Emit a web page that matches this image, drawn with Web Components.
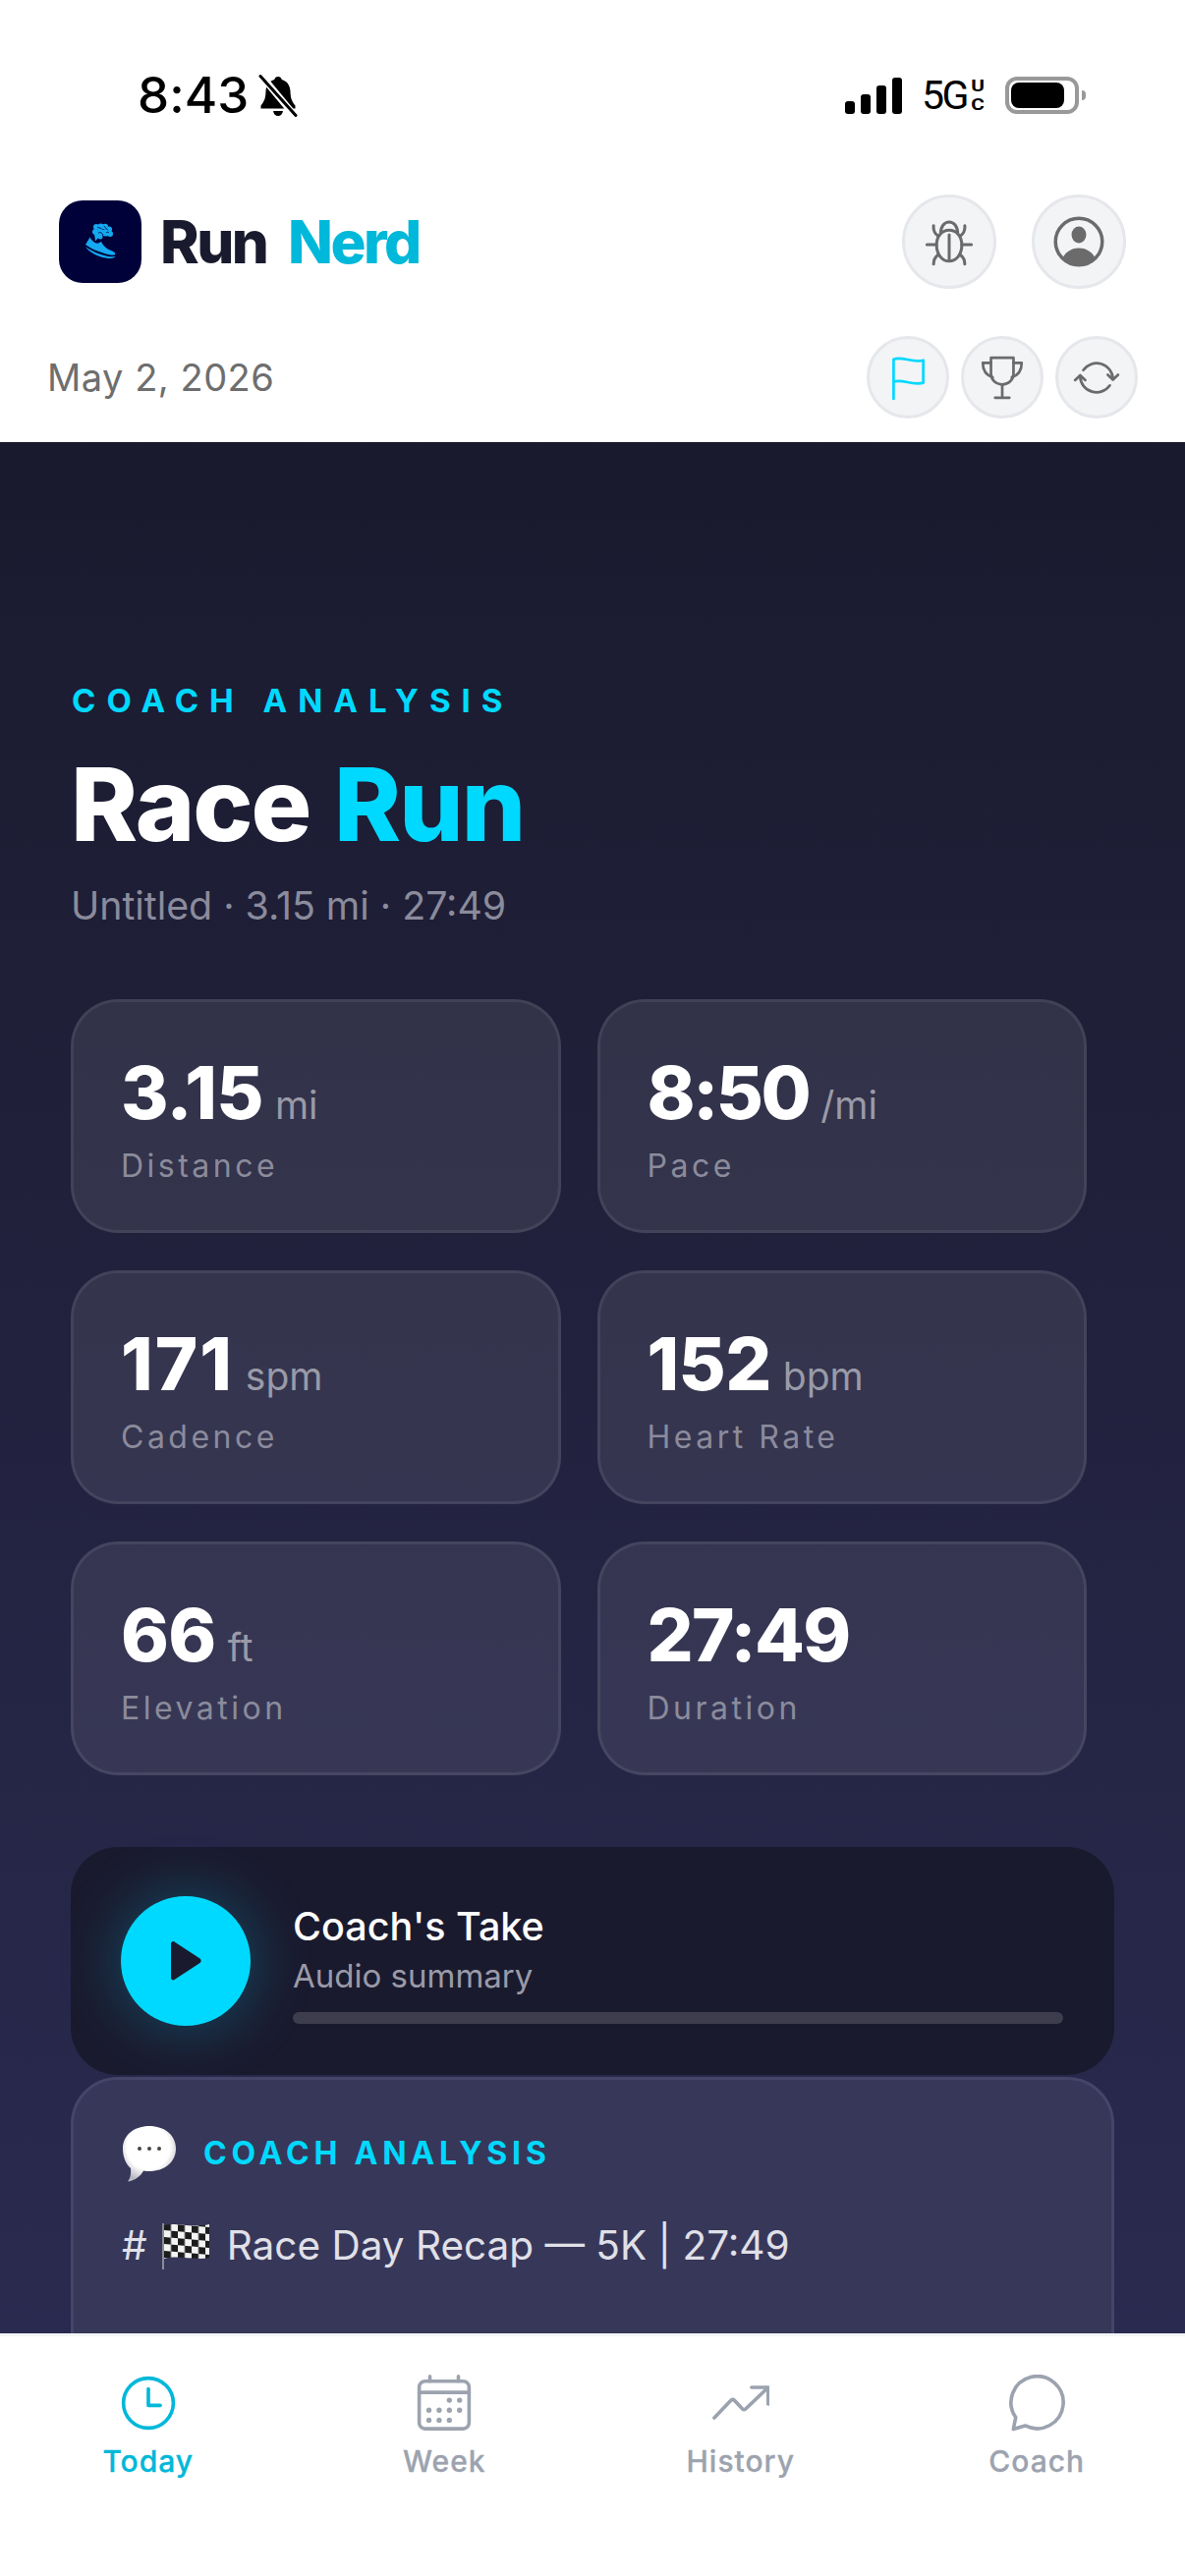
<!DOCTYPE HTML><html lang="en">
<head><meta charset="utf-8">
<title>Run Nerd - Coach Analysis</title>
<style>
  html, body { margin: 0; height: 100%; background: #fff; }
  body { font-family: Inter, "Noto Sans", sans-serif; overflow: hidden; }
  run-app { height: 100vh; }
</style>

<template id="run-app-template">
  <style>
    :host { display: flex; flex-direction: column; overflow: hidden; }
    main { flex: 1; min-height: 0; overflow: hidden; display: flex; flex-direction: column;
      padding: 0 72px; background: linear-gradient(180deg, #1a1a2e 0%, #2a2a50 100%); }
  </style>
  <slot name="top"></slot>
  <main><slot></slot></main>
  <slot name="bottom"></slot>
</template>

<template id="status-bar-template">
  <style>
    :host { display: flex; justify-content: space-between; align-items: center; height: 193px; box-sizing: border-box;
      padding: 1px 101px 0 140px; color: #000; }
    .left, .right { display: flex; align-items: center; }
    .time { font: 500 51px/60px Inter, sans-serif; margin-right: 9px; letter-spacing: .1px; }
    .bars { display: flex; align-items: flex-end; gap: 6px; height: 37px; margin-right: 20px; }
    .bars i { display: block; width: 10px; background: #000; border-radius: 3px; }
    .net { font: 400 41px/44px Roboto, sans-serif; letter-spacing: -2.500px; white-space: nowrap; }
    .uc { display: flex; flex-direction: column; font: 700 16px/19px Roboto, sans-serif; width: 16px; margin: 0 20px 0 3px; align-items: center;
      transform: scaleX(1.3); }
    .battery { display: flex; align-items: center; gap: 3px; }
    .shell { box-sizing: border-box; width: 75px; height: 38px; border: 4px solid #999; border-radius: 12px; padding: 2px; }
    .fill { width: 54px; height: 26px; background: #000; border-radius: 8px; }
    .nub { width: 4px; height: 10px; background: #999; border-radius: 0 4px 4px 0; }
  </style>
  <div class="left">
    <span class="time"><slot name="time"></slot></span>
    <svg width="42" height="43" viewBox="0 0 40 43">
      <path d="M20 2c2 0 3.300 1.200 3.700 2.900 5.500 1.500 8.500 6 8.800 12 .2 6 1 9.500 5 14.500v3H2.500v-3c4-5 4.800-8.500 5-14.500.3-6 3.300-10.500 8.800-12C16.700 3.200 18 2 20 2zM15 37h10c-.4 3-2.500 5-5 5s-4.600-2-5-5z" fill="#000"/>
      <path d="M3 1l34 41" stroke="#fff" stroke-width="7"/>
      <path d="M2 1.500l36 40" stroke="#000" stroke-width="3" stroke-linecap="round"/>
    </svg>
  </div>
  <div class="right">
    <div class="bars"><i style="height:13px"></i><i style="height:20px"></i><i style="height:29px"></i><i style="height:37px"></i></div>
    <span class="net">5G</span>
    <span class="uc"><span>U</span><span>C</span></span>
    <div class="battery"><div class="shell"><div class="fill"></div></div><div class="nub"></div></div>
  </div>
</template>

<template id="app-header-template">
  <style>
    :host { display: flex; justify-content: space-between; align-items: center; padding: 5px 60px 0 60px; height: 96px; }
    .brand { display: flex; align-items: center; gap: 19px; }
    .mark { width: 84px; height: 84px; border-radius: 24px; background: #01013a; display: block; }
    .name { font: 800 60px/70px Inter, sans-serif; letter-spacing: -2.500px; color: #1a1a2e; word-spacing: 11px; }
    .name b { font-weight: 800; color: #00b8d9; }
    .actions { display: flex; gap: 36px; }
  </style>
  <div class="brand">
    <svg class="mark" viewBox="0 0 84 84">
      <g fill="#14a9f0">
        <circle cx="38" cy="27" r="3"/><circle cx="42.500" cy="26.500" r="3"/><circle cx="47" cy="26.800" r="3"/>
        <circle cx="51" cy="29.500" r="3"/><circle cx="52" cy="34" r="3"/><circle cx="47.500" cy="33" r="3.500"/>
        <circle cx="42" cy="32" r="3.500"/><circle cx="37" cy="32" r="3"/><circle cx="42" cy="37" r="2.500"/>
        <path d="M36 34h5l-1 4-3 3.500z"/>
        <path d="M31.500 37.500L27 45c5 4 15 8 23 10 3 .7 6.500 1 7.300 0 .2-2-1.800-3-4.300-4-4.500-1.500-8-5-10-9l-3.500 1.800c-3.500-.3-6-2.800-8-6.300z"/>
        <path d="M27 47c5 4 15 8.500 23 10 3 .5 6 .3 7.500-.2-1 2-4.500 2.500-7.500 2.200-9-1-19-5.500-23-12z"/>
      </g>
      <path d="M39 27c2 1.500 4 .5 5 2.500M46 26c1 2.500 3 2.500 4 4.500M40 33c2-1 4 0 5 2M48 33c1-1 2-1 3 0" fill="none" stroke="#01013a" stroke-width=".8"/>
    </svg>
    <span class="name"><slot name="first"></slot> <b><slot name="second"></slot></b></span>
  </div>
  <div class="actions"><slot name="actions"></slot></div>
</template>

<template id="date-row-template">
  <style>
    :host { display: flex; justify-content: space-between; align-items: center; padding: 48px 48px 24px 48px; height: 84px; }
    .date { font: 400 38px/46px Inter, sans-serif; color: #6e6e6e; letter-spacing: .5px; }
    .actions { display: flex; gap: 12px; }
  </style>
  <span class="date"><slot></slot></span>
  <div class="actions"><slot name="actions"></slot></div>
</template>

<template id="icon-button-template">
  <style>
    :host { display: flex; align-items: center; justify-content: center; box-sizing: border-box;
      width: var(--size, 96px); height: var(--size, 96px); border-radius: 50%;
      background: #f3f4f6; border: 3px solid #e5e7eb; }
    :host([small]) { --size: 84px; }
  </style>
  <slot></slot>
</template>

<template id="coach-hero-template">
  <style>
    :host { display: block; padding: 245px 28px 0 0; }
    .eyebrow { font: 700 33px/36px Inter, sans-serif; letter-spacing: 11px; color: #00d9ff; margin-left: 1px; }
    h1 { margin: 30px 0 0; font: 800 103px/116px Inter, sans-serif; letter-spacing: -2px; word-spacing: 4px; color: #fff; }
    h1 b { font-weight: 800; color: #00d9ff; }
    .sub { margin-top: 21px; font: 400 39.300px/48px Inter, sans-serif; color: #8b8b9c; }
    .grid { margin-top: 71px; display: grid; grid-template-columns: 1fr 1fr; gap: 38px 37px; }
  </style>
  <div class="eyebrow"><slot name="eyebrow"></slot></div>
  <h1><slot name="plain"></slot> <b><slot name="accent"></slot></b></h1>
  <div class="sub"><slot name="sub"></slot></div>
  <div class="grid"><slot></slot></div>
</template>

<template id="stat-card-template">
  <style>
    :host { display: block; box-sizing: border-box; height: 238px; padding: 49px 48px 0;
      background: rgba(255,255,255,.085); border: 3px solid rgba(255,255,255,.075); border-radius: 48px; }
    .top { display: flex; align-items: baseline; gap: 12px; height: 86px; line-height: 86px; }
    .value { font: 800 74px/86px Inter, sans-serif; letter-spacing: var(--track, -.6px); color: #fff; }
    .unit { font: 400 39px/86px Inter, sans-serif; color: #9a9aa8; }
    .label { margin-top: 12px; font: 400 32px/40px Inter, sans-serif; letter-spacing: 3.500px; color: #8b8b9c; }
  </style>
  <div class="top"><span class="value"><slot name="value"></slot></span><span class="unit"><slot name="unit"></slot></span></div>
  <div class="label"><slot name="label"></slot></div>
</template>

<template id="audio-player-template">
  <style>
    :host { display: flex; align-items: center; gap: 43px; box-sizing: border-box; height: 232px; margin-top: 73px; padding: 0 52px 0 51px;
      background: #1a1a2e; border-radius: 48px; flex: none; }
    .play { flex: none; width: 132px; height: 132px; border-radius: 50%; background: #00d9ff;
      box-shadow: 0 0 64px rgba(0,217,255,.28); display: flex; align-items: center; justify-content: center; }
    .body { flex: 1; min-width: 0; padding-top: 8px; }
    .title { font: 500 39.500px/46px Inter, sans-serif; color: #fff; margin-top: -3px; }
    .sub { margin-top: 6px; font: 400 33px/42px Inter, sans-serif; color: #9a9aa8; }
    .track { margin-top: 16px; height: 12px; border-radius: 6px; background: #3d3d4d; }
  </style>
  <div class="play">
    <svg width="36" height="40" viewBox="0 0 36 40"><path d="M3 2.500c0-2 2-3 3.500-2l26 17c1.500 1 1.500 3.500 0 4.500l-26 17c-1.500 1-3.500 0-3.500-2z" fill="#1a1a2e"/></svg>
  </div>
  <div class="body">
    <div class="title"><slot name="title"></slot></div>
    <div class="sub"><slot name="sub"></slot></div>
    <div class="track"></div>
  </div>
</template>

<template id="analysis-card-template">
  <style>
    :host { display: block; box-sizing: border-box; flex: none; height: 400px; margin-top: 2px; padding: 46px 49px 0;
      background: #37375a; border: 3px solid #45456a; border-radius: 48px; }
    .head { display: flex; align-items: center; gap: 27px; height: 58px; }
    .heading { font: 700 32px/40px Inter, sans-serif; letter-spacing: 4.800px; color: #00d9ff; }
    .text { margin-top: 39px; display: flex; align-items: center; gap: 12px; font: 400 40.500px/52px Inter, sans-serif; color: #e0e0e8; }
    ::slotted(svg:not([slot])) { margin: 0 5px 0 2px; }
  </style>
  <div class="head"><slot name="icon"></slot><span class="heading"><slot name="heading"></slot></span></div>
  <div class="text"><slot></slot></div>
</template>

<template id="tab-bar-template">
  <style>
    :host { display: grid; grid-template-columns: repeat(4, 1fr); box-sizing: border-box; height: 247px; padding-top: 39px;
      background: #fff; border-top: 3px solid #f3f4f6; }
  </style>
  <slot></slot>
</template>

<template id="tab-item-template">
  <style>
    :host { display: flex; flex-direction: column; align-items: center; gap: 11px; color: #9ca3af; }
    :host([active]) { color: #00b8d9; }
    .label { font: 500 30px/38px Inter, sans-serif; letter-spacing: 1px; -webkit-text-stroke: .3px currentColor; }
  </style>
  <slot name="icon"></slot>
  <span class="label"><slot></slot></span>
</template>
</head><body>

<run-app>
  <status-bar slot="top"><span slot="time">8:43</span></status-bar>

  <app-header slot="top">
    <span slot="first">Run</span>
    <span slot="second">Nerd</span>
    <icon-button slot="actions">
      <svg width="56" height="56" viewBox="0 0 24 24" fill="none" stroke="#6b6b6b" stroke-width="1.300" stroke-linecap="round">
        <path d="M12 7c-3.200 0-5.500 2.600-5.500 6.500s2.300 7 5.500 7 5.500-3 5.500-7S15.200 7 12 7z"/>
        <path d="M8.300 8.300C8.300 5.200 10 3.400 12 3.400s3.700 1.800 3.700 4.900"/>
        <path d="M12 9v10.500M2.300 13.300h4.200M17.500 13.300h4.200"/>
        <path d="M5.200 5c-.2 2 .5 3.500 2 4.500M18.800 5c.2 2-.5 3.500-2 4.500M5.200 21.700c0-2 .7-3 2-4M18.800 21.700c0-2-.7-3-2-4"/>
      </svg>
    </icon-button>
    <icon-button slot="actions">
      <svg width="56" height="56" viewBox="0 0 24 24">
        <circle cx="12" cy="12" r="10.200" fill="none" stroke="#6b6b6b" stroke-width="1.500"/>
        <ellipse cx="12" cy="9" rx="3.200" ry="3.600" fill="#6b6b6b"/>
        <path d="M4.800 19.200C6.500 16.200 9 14.800 12 14.800s5.500 1.400 7.200 4.400A10.200 10.200 0 0 1 4.800 19.200z" fill="#6b6b6b"/>
      </svg>
    </icon-button>
  </app-header>

  <date-row slot="top">
    May 2, 2026
    <icon-button slot="actions" small>
      <svg width="50" height="50" viewBox="0 0 24 24" fill="none" stroke="#00d9ff" stroke-width="1.300" stroke-linecap="round" stroke-linejoin="round">
        <path d="M5 22.500V3.200c4.500-1.700 9 2 14.500.5v11c-5.500 1.500-10-2-14.500-.5"/>
      </svg>
    </icon-button>
    <icon-button slot="actions" small>
      <svg width="50" height="50" viewBox="0 0 24 24" fill="none" stroke="#6b6b6b" stroke-width="1.300" stroke-linecap="round" stroke-linejoin="round">
        <path d="M6.500 2.500h11v7.800c0 3-2.500 5.200-5.500 5.200s-5.500-2.200-5.500-5.200z"/>
        <path d="M6.500 5H2.500c0 3.500 1.300 5.800 4.800 7M17.500 5h4c0 3.500-1.300 5.800-4.800 7M12 15.500v6.500M8.500 22h7"/>
      </svg>
    </icon-button>
    <icon-button slot="actions" small>
      <svg width="50" height="50" viewBox="0 0 24 24" fill="none" stroke="#6b6b6b" stroke-width="1.300" stroke-linecap="round" stroke-linejoin="round">
        <path d="M5.500 8.500A8 8 0 0 1 20 12.500M17.500 10.800l2.500 2.400 2.500-2.400"/>
        <path d="M18.500 16A8 8 0 0 1 4 11.800M1.500 13.400L4 11l2.500 2.400"/>
      </svg>
    </icon-button>
  </date-row>

  <coach-hero>
    <span slot="eyebrow">COACH ANALYSIS</span>
    <span slot="plain">Race</span>
    <span slot="accent">Run</span>
    <span slot="sub">Untitled · 3.15 mi · 27:49</span>
    <stat-card><span slot="value">3.15</span><span slot="unit">mi</span><span slot="label">Distance</span></stat-card>
    <stat-card style="--track:-2.500px"><span slot="value">8:50</span><span slot="unit">/mi</span><span slot="label">Pace</span></stat-card>
    <stat-card style="--track:2px"><span slot="value">171</span><span slot="unit">spm</span><span slot="label">Cadence</span></stat-card>
    <stat-card><span slot="value">152</span><span slot="unit">bpm</span><span slot="label">Heart Rate</span></stat-card>
    <stat-card><span slot="value">66</span><span slot="unit">ft</span><span slot="label">Elevation</span></stat-card>
    <stat-card style="--track:-1.600px"><span slot="value">27:49</span><span slot="label">Duration</span></stat-card>
  </coach-hero>

  <audio-player>
    <span slot="title">Coach's Take</span>
    <span slot="sub">Audio summary</span>
  </audio-player>

  <analysis-card>
    <svg slot="icon" width="56" height="58" viewBox="0 0 56 58">
      <defs><radialGradient id="bubble" cx=".48" cy=".38" r=".62"><stop offset=".65" stop-color="#fff"/><stop offset="1" stop-color="#b9b9c2"/></radialGradient></defs>
      <path d="M28 1c15 0 27 9 27 23S43 47 28 47c-2 0-4-.2-6-.6C19 52 14 56 6 57.500c2.500-3 3.500-7 3-13.500C4 40 1 32 1 24 1 10 13 1 28 1z" fill="url(#bubble)"/>
      <circle cx="18" cy="24" r="2" fill="#444"/><circle cx="28" cy="24" r="2" fill="#444"/><circle cx="38" cy="24" r="2" fill="#444"/>
    </svg>
    <span slot="heading">COACH ANALYSIS</span>
    <span>#</span>
    <svg width="50" height="48" viewBox="0 0 50 48">
      <defs><pattern id="check" width="14" height="14" patternUnits="userSpaceOnUse" patternTransform="translate(3 1) skewY(5)"><rect width="14" height="14" fill="#f4f4f4"/><rect width="7" height="7" fill="#1c1c1c"/><rect x="7" y="7" width="7" height="7" fill="#1c1c1c"/></pattern></defs>
      <rect x="1" y="1" width="2" height="47" fill="#8c8c96"/>
      <path d="M3 3c15-3 30 3 46-1v34c-16 3-31-3-46 1z" fill="url(#check)"/>
    </svg>
    <span>Race Day Recap — 5K | 27:49</span>
  </analysis-card>

  <tab-bar slot="bottom">
    <tab-item active>
      <svg slot="icon" width="58" height="58" viewBox="0 0 24 24" fill="none" stroke="currentColor" stroke-width="1.500" stroke-linecap="round" stroke-linejoin="round">
        <circle cx="12" cy="12" r="10.500"/><path d="M12 6v7h5"/>
      </svg>
      Today
    </tab-item>
    <tab-item>
      <svg slot="icon" width="58" height="58" viewBox="0 0 24 24" fill="none" stroke="currentColor" stroke-width="1.500" stroke-linecap="round" stroke-linejoin="round">
        <rect x="1.500" y="2.800" width="21" height="20" rx="2.500"/><path d="M1.500 7.500h21M6 .8v2M18 .8v2"/>
        <g fill="currentColor" stroke="none">
          <circle cx="14.200" cy="10.800" r="1.100"/><circle cx="18.500" cy="10.800" r="1.100"/>
          <circle cx="5.600" cy="15" r="1.100"/><circle cx="9.900" cy="15" r="1.100"/><circle cx="14.200" cy="15" r="1.100"/><circle cx="18.500" cy="15" r="1.100"/>
          <circle cx="5.600" cy="19.200" r="1.100"/><circle cx="9.900" cy="19.200" r="1.100"/><circle cx="14.200" cy="19.200" r="1.100"/>
        </g>
      </svg>
      Week
    </tab-item>
    <tab-item>
      <svg slot="icon" width="58" height="58" viewBox="0 0 24 24" fill="none" stroke="currentColor" stroke-width="1.500" stroke-linecap="round" stroke-linejoin="round">
        <path d="M.8 18.200l7-7.300q.8-.7 1.500 0l3.300 3.500q.8.700 1.500 0L23.300 5.600M16.500 5.400h7v7"/>
      </svg>
      History
    </tab-item>
    <tab-item>
      <svg slot="icon" width="58" height="58" viewBox="0 0 24 24" fill="none" stroke="currentColor" stroke-width="1.500" stroke-linecap="round" stroke-linejoin="round">
        <path d="M3.200 18L2.200 23l5-1.500A11 11 0 1 0 3.200 18z"/>
      </svg>
      Coach
    </tab-item>
  </tab-bar>
</run-app>

<script>{
const define = (name, templateId) => customElements.define(name,
    class extends HTMLElement {
        constructor() {
            super()
            const c = document.querySelector(templateId).content
            this.attachShadow({ mode:'open' }).appendChild( c.cloneNode(true) )
        }
    }
)
define('run-app', '#run-app-template')
define('status-bar', '#status-bar-template')
define('app-header', '#app-header-template')
define('date-row', '#date-row-template')
define('icon-button', '#icon-button-template')
define('coach-hero', '#coach-hero-template')
define('stat-card', '#stat-card-template')
define('audio-player', '#audio-player-template')
define('analysis-card', '#analysis-card-template')
define('tab-bar', '#tab-bar-template')
define('tab-item', '#tab-item-template')
}</script>

</body></html>
